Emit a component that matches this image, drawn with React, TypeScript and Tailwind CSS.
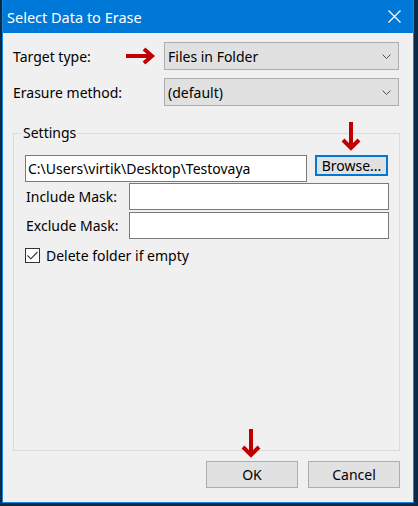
const font = { fontFamily: '"Noto Sans", "Open Sans", sans-serif' };

function RightArrow() {
  return (
    <svg width="30" height="18" viewBox="0 0 30 18" className="shrink-0">
      <path d="M0 9 H26" stroke="#c00000" strokeWidth="4" />
      <path d="M18 2 L26 9 L18 16" stroke="#c00000" strokeWidth="4" fill="none" />
    </svg>
  );
}

function DownArrow() {
  return (
    <svg width="22" height="30" viewBox="0 0 22 30">
      <path d="M11 0 V26" stroke="#c00000" strokeWidth="4" />
      <path d="M3 18 L11 26 L19 18" stroke="#c00000" strokeWidth="4" fill="none" />
    </svg>
  );
}

function Chevron() {
  return (
    <svg width="9" height="5" viewBox="0 0 9 5">
      <path d="M0.5 0.5 L4.5 4.5 L8.5 0.5" stroke="#505050" strokeWidth="1" fill="none" />
    </svg>
  );
}

function Combo({ value }: { value: string }) {
  return (
    <div className="w-[235px] h-[28px] bg-[#e1e1e1] border border-[#adadad] flex items-center justify-between pl-[3px] pr-[7px]">
      <span>{value}</span>
      <Chevron />
    </div>
  );
}

export default function App() {
  return (
    <div style={font} className="w-[418px] h-[506px] bg-[#0b2a47] pl-[2px] pr-[4px] pb-[3px] text-[14px] text-black">
      <div className="h-full flex flex-col border border-t-0 border-[#1a86da]">
        <div className="h-[33px] bg-[#0078d7] flex items-center justify-between pl-[4px] pr-[12px] text-white">
          <span className="text-[14.5px] pt-[2px]">Select Data to Erase</span>
          <svg width="13" height="13" viewBox="0 0 13 13">
            <path d="M0.5 0.5 L12.5 12.5 M12.5 0.5 L0.5 12.5" stroke="white" strokeWidth="1.2" />
          </svg>
        </div>

        <div className="flex-1 bg-[#f0f0f0] flex flex-col pl-[10px] pr-[13px] pt-[9px] pb-[14px]">
          <div className="flex items-center">
            <span className="w-[113px]">Target type:</span>
            <RightArrow />
            <div className="ml-[8px]">
              <Combo value="Files in Folder" />
            </div>
          </div>
          <div className="flex items-center mt-[8px]">
            <span className="w-[151px]">Erasure method:</span>
            <Combo value="(default)" />
          </div>

          <fieldset className="mt-[17px] w-[387px] h-[328px] border border-[#dcdcdc] pl-[11px] pt-[12px]">
            <legend className="ml-[-4px] px-[2px] leading-[20px]">Settings</legend>
            <div className="flex items-start gap-[8px] relative">
              <div className="w-[282px] h-[27px] bg-white border border-[#7a7a7a] flex items-center pl-[2px]">
                C:\Users\virtik\Desktop\Testovaya
              </div>
              <div className="w-[73px] h-[21px] bg-[#e1e1e1] border-2 border-[#0078d7] flex items-center justify-center leading-none">
                Browse...
              </div>
              <div className="absolute left-[315px] top-[-33px]">
                <DownArrow />
              </div>
            </div>
            <div className="flex items-center mt-[1px]">
              <span className="w-[104px] pl-[1px]">Include Mask:</span>
              <div className="w-[260px] h-[27px] bg-white border border-[#7a7a7a]" />
            </div>
            <div className="flex items-center mt-[2px]">
              <span className="w-[104px] pl-[1px]">Exclude Mask:</span>
              <div className="w-[260px] h-[27px] bg-white border border-[#7a7a7a]" />
            </div>
            <div className="flex items-center mt-[6px] gap-[6px]">
              <div className="w-[15px] h-[15px] bg-white border border-[#333333] flex items-center justify-center">
                <svg width="11" height="9" viewBox="0 0 11 9">
                  <path d="M0.5 4.5 L3.8 7.8 L10.5 1" stroke="#333333" strokeWidth="1.1" fill="none" />
                </svg>
              </div>
              <span>Delete folder if empty</span>
            </div>
          </fieldset>

          <div className="flex justify-end gap-[10px] mt-auto">
            <div className="relative w-[92px] h-[27px] bg-[#e1e1e1] border border-[#adadad] flex items-center justify-center">
              OK
              <div className="absolute left-[33px] top-[-33px]">
                <DownArrow />
              </div>
            </div>
            <div className="w-[92px] h-[27px] bg-[#e1e1e1] border border-[#adadad] flex items-center justify-center">
              Cancel
            </div>
          </div>
        </div>
      </div>
    </div>
  );
}
